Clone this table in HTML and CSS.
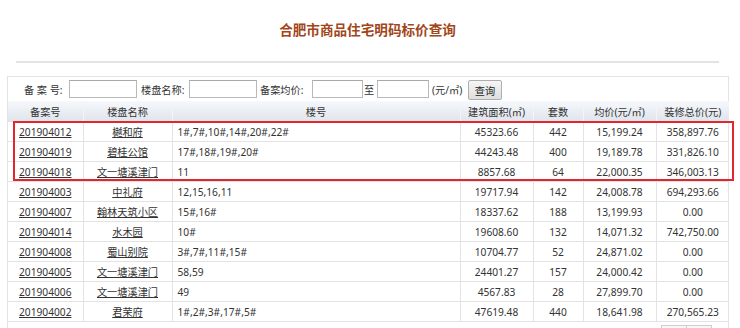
FILE: index.html
```html
<!DOCTYPE html>
<html lang="zh-CN">

<head>
    <meta charset="UTF-8">
    <meta name="viewport" content="width=device-width, initial-scale=1.0">
    <title>合肥市商品住宅明码标价查询</title>
    <link rel="stylesheet" href="styles.css">
</head>

<body>
    <div class="page">
        <!-- Title -->
        <h1 class="title">合肥市商品住宅明码标价查询</h1>
        <div class="rule"></div>

        <div class="panel">
            <!-- Search bar -->
            <div class="search">
                <span class="lbl lbl-no">备 案 号:</span>
                <input type="text" class="field field-no">
                <span class="lbl lbl-name">楼盘名称:</span>
                <input type="text" class="field field-name">
                <span class="lbl lbl-price">备案均价:</span>
                <input type="text" class="field field-min">
                <span class="lbl lbl-to">至</span>
                <input type="text" class="field field-max">
                <span class="lbl lbl-unit">(元/㎡)</span>
                <button class="btn-query">查询</button>
            </div>

            <!-- Result list -->
            <table class="list">
                <colgroup>
                    <col class="c-no">
                    <col class="c-name">
                    <col class="c-bld">
                    <col class="c-area">
                    <col class="c-sets">
                    <col class="c-avg">
                    <col class="c-deco">
                </colgroup>
                <thead>
                    <tr>
                        <th>备案号</th>
                        <th>楼盘名称</th>
                        <th>楼号</th>
                        <th>建筑面积(㎡)</th>
                        <th>套数</th>
                        <th>均价(元/㎡)</th>
                        <th>装修总价(元)</th>
                    </tr>
                </thead>
                <tbody>
                    <tr>
                        <td><a href="#">201904012</a></td>
                        <td><a href="#">樾和府</a></td>
                        <td class="bld">1#,7#,10#,14#,20#,22#</td>
                        <td>45323.66</td>
                        <td>442</td>
                        <td>15,199.24</td>
                        <td>358,897.76</td>
                    </tr>
                    <tr>
                        <td><a href="#">201904019</a></td>
                        <td><a href="#">碧桂公馆</a></td>
                        <td class="bld">17#,18#,19#,20#</td>
                        <td>44243.48</td>
                        <td>400</td>
                        <td>19,189.78</td>
                        <td>331,826.10</td>
                    </tr>
                    <tr>
                        <td><a href="#">201904018</a></td>
                        <td><a href="#">文一塘溪津门</a></td>
                        <td class="bld">11</td>
                        <td>8857.68</td>
                        <td>64</td>
                        <td>22,000.35</td>
                        <td>346,003.13</td>
                    </tr>
                    <tr>
                        <td><a href="#">201904003</a></td>
                        <td><a href="#">中礼府</a></td>
                        <td class="bld">12,15,16,11</td>
                        <td>19717.94</td>
                        <td>142</td>
                        <td>24,008.78</td>
                        <td>694,293.66</td>
                    </tr>
                    <tr>
                        <td><a href="#">201904007</a></td>
                        <td><a href="#">翰林天筑小区</a></td>
                        <td class="bld">15#,16#</td>
                        <td>18337.62</td>
                        <td>188</td>
                        <td>13,199.93</td>
                        <td>0.00</td>
                    </tr>
                    <tr>
                        <td><a href="#">201904014</a></td>
                        <td><a href="#">水木园</a></td>
                        <td class="bld">10#</td>
                        <td>19608.60</td>
                        <td>132</td>
                        <td>14,071.32</td>
                        <td>742,750.00</td>
                    </tr>
                    <tr>
                        <td><a href="#">201904008</a></td>
                        <td><a href="#">蜀山别院</a></td>
                        <td class="bld">3#,7#,11#,15#</td>
                        <td>10704.77</td>
                        <td>52</td>
                        <td>24,871.02</td>
                        <td>0.00</td>
                    </tr>
                    <tr>
                        <td><a href="#">201904005</a></td>
                        <td><a href="#">文一塘溪津门</a></td>
                        <td class="bld">58,59</td>
                        <td>24401.27</td>
                        <td>157</td>
                        <td>24,000.42</td>
                        <td>0.00</td>
                    </tr>
                    <tr>
                        <td><a href="#">201904006</a></td>
                        <td><a href="#">文一塘溪津门</a></td>
                        <td class="bld">49</td>
                        <td>4567.83</td>
                        <td>28</td>
                        <td>27,899.70</td>
                        <td>0.00</td>
                    </tr>
                    <tr>
                        <td><a href="#">201904002</a></td>
                        <td><a href="#">君荣府</a></td>
                        <td class="bld">1#,2#,3#,17#,5#</td>
                        <td>47619.48</td>
                        <td>440</td>
                        <td>18,641.98</td>
                        <td>270,565.23</td>
                    </tr>
                </tbody>
            </table>

            <!-- Pager -->
            <div class="pager">
                <span class="pg"></span>
                <span class="pg"></span>
            </div>
        </div>

        <!-- Highlight box drawn over the first three rows -->
        <div class="mark"></div>
    </div>
</body>

</html>
```

FILE: styles.css
```css
body {
    margin: 0;
    padding: 0;
    background: #fff;
    color: #333;
    font-family: "Noto Sans", "Noto Sans CJK SC", sans-serif;
    font-size: 10.2px;
    overflow: hidden;
}

.page {
    position: relative;
    width: 740px;
    height: 328px;
    overflow: hidden;
}

.title {
    margin: 20px 0 0 16px;
    width: 703px;
    height: 20px;
    line-height: 20px;
    text-align: center;
    font-size: 13.6px;
    font-weight: bold;
    color: #a2461a;
}

.rule {
    margin: 21px 0 0 16px;
    width: 703px;
    height: 2px;
    background: #e3e3e3;
}

.panel {
    margin: 13px 0 0 7px;
    width: 722px;
    box-sizing: border-box;
    border: 1px solid #e3e3e3;
    border-bottom: none;
}

/* search bar */
.search {
    display: flex;
    align-items: center;
    height: 24px;
    padding-left: 16px;
}

.lbl {
    box-sizing: border-box;
    white-space: nowrap;
    color: #333;
}

.lbl-no {
    width: 45px;
}

.lbl-name {
    width: 52px;
    padding-left: 4px;
}

.lbl-price {
    width: 55px;
    padding-left: 3px;
}

.lbl-to {
    width: 14px;
    padding-left: 1px;
}

.lbl-unit {
    width: 39px;
    padding-left: 3px;
}

.field {
    box-sizing: border-box;
    height: 18px;
    margin: 0;
    padding: 0 2px;
    border: 1px solid #b9b9b9;
    border-top-color: #a8a8a8;
    background: #fff;
}

.field-no,
.field-name {
    width: 68px;
}

.field-min {
    width: 51px;
}

.field-max {
    width: 52px;
}

.btn-query {
    box-sizing: border-box;
    width: 34px;
    height: 20px;
    margin: 2px 0 0;
    padding: 0;
    border: 1px solid #adadad;
    border-radius: 2px;
    background: linear-gradient(#f6f6f6, #dedede);
    font-family: inherit;
    font-size: 10.2px;
    color: #222;
}

/* result table */
.list {
    width: 720px;
    border-collapse: collapse;
    table-layout: fixed;
}

.c-no {
    width: 75px;
}

.c-name {
    width: 89px;
}

.c-bld {
    width: 288px;
}

.c-area,
.c-avg,
.c-deco {
    width: 73px;
}

.c-sets {
    width: 50px;
}

.list th {
    height: 20px;
    padding: 0;
    font-weight: normal;
    color: #333;
    background: linear-gradient(#f6f8fb, #dfe5ec);
    border-left: 1px solid #f1f4f8;
    white-space: nowrap;
}

.list th:first-child {
    border-left: none;
}

.list td {
    height: 19px;
    padding: 0;
    text-align: center;
    border: 1px solid #e3e3e3;
    white-space: nowrap;
}

.list td:first-child {
    border-left: none;
}

.list td:last-child {
    border-right: none;
}

.list td.bld {
    text-align: left;
    padding-left: 5px;
}

.list a {
    color: #333;
    text-decoration: underline;
}

/* pager */
.pager {
    display: flex;
    justify-content: flex-end;
    padding: 3px 16px 0 0;
}

.pg {
    width: 24px;
    height: 14px;
    border: 1px solid #cfcfcf;
    background: #f7f7f7;
}

.pg + .pg {
    border-left: none;
}

.mark {
    position: absolute;
    left: 13px;
    top: 121px;
    width: 721px;
    height: 60px;
    box-sizing: border-box;
    border: 2px solid #e3262e;
}
```
